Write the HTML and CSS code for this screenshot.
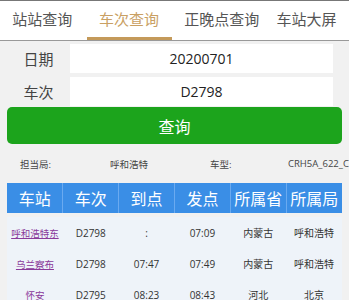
FILE: index.html
```html
<!DOCTYPE html>
<html lang="zh-CN">
<head>
    <meta charset="UTF-8">
    <meta name="viewport" content="width=device-width, initial-scale=1.0">
    <title>车次查询</title>
    <link rel="stylesheet" href="styles.css">
</head>
<body>
    <div class="tabs">
        <div class="tab">站站查询</div>
        <div class="tab active">车次查询</div>
        <div class="tab">正晚点查询</div>
        <div class="tab">车站大屏</div>
    </div>

    <form class="query">
        <div class="row">
            <label>日期</label>
            <div class="field">20200701</div>
        </div>
        <div class="row">
            <label>车次</label>
            <div class="field">D2798</div>
        </div>
        <button type="button" class="submit">查询</button>
    </form>

    <div class="info">
        <span>担当局:</span>
        <span>呼和浩特</span>
        <span>车型:</span>
        <span>CRH5A_622_C</span>
    </div>

    <table class="stops">
        <thead>
            <tr>
                <th>车站</th>
                <th>车次</th>
                <th>到点</th>
                <th>发点</th>
                <th>所属省</th>
                <th>所属局</th>
            </tr>
        </thead>
        <tbody>
            <tr>
                <td><a href="#">呼和浩特东</a></td>
                <td>D2798</td>
                <td>:</td>
                <td>07:09</td>
                <td>内蒙古</td>
                <td>呼和浩特</td>
            </tr>
            <tr>
                <td><a href="#">乌兰察布</a></td>
                <td>D2798</td>
                <td>07:47</td>
                <td>07:49</td>
                <td>内蒙古</td>
                <td>呼和浩特</td>
            </tr>
            <tr>
                <td><a href="#">怀安</a></td>
                <td>D2795</td>
                <td>08:23</td>
                <td>08:43</td>
                <td>河北</td>
                <td>北京</td>
            </tr>
        </tbody>
    </table>
</body>
</html>
```

FILE: styles.css
```css
body {
    margin: 0;
    background-color: #f1f1f1;
    font-family: "Open Sans", "Noto Sans CJK SC", sans-serif;
    color: #333;
    overflow: hidden;
}

.tabs {
    display: flex;
    height: 39px;
    background-color: #fff;
    border-top: 1px solid #777;
    border-bottom: 1px solid #999;
}

.tab {
    flex: 1;
    text-align: center;
    line-height: 36px;
    font-size: 15px;
    color: #555;
    border-bottom: 3px solid transparent;
}

.tab.active {
    color: #c9a063;
    border-bottom-color: #c49a5a;
    margin: 0 8px 0 2px;
}

.query {
    padding: 3px 7px 0;
}

.row {
    display: flex;
    align-items: center;
    margin-bottom: 4px;
}

.row label {
    width: 63px;
    text-align: center;
    font-size: 15px;
    color: #444;
}

.field {
    flex: 1;
    height: 29px;
    line-height: 29px;
    margin-right: 9px;
    background-color: #fff;
    text-align: center;
    font-size: 14px;
    color: #222;
}

.submit {
    display: block;
    width: 100%;
    height: 37px;
    margin-top: -3px;
    border: none;
    border-radius: 5px;
    background-color: #1ca41c;
    color: #fff;
    font-family: inherit;
    font-size: 16px;
}

.info {
    display: grid;
    grid-template-columns: 90px 100px 78px auto;
    margin: 4px 0 0 7px;
    padding-left: 13px;
    height: 31px;
    align-items: center;
    font-size: 9.5px;
    color: #444;
    white-space: nowrap;
}

.stops {
    width: 335px;
    margin: 4px 7px 0;
    border-collapse: collapse;
    table-layout: fixed;
}

.stops th {
    height: 30px;
    padding: 0;
    background-color: #3a8ee6;
    color: #fff;
    font-size: 16px;
    font-weight: normal;
    border-left: 1px solid #6aaaf0;
}

.stops th:first-child {
    border-left: none;
}

.stops tbody tr:first-child td {
    border-top: 4px solid #f1f1f1;
}

.stops td {
    height: 31px;
    padding: 0;
    text-align: center;
    font-size: 10px;
    color: #333;
    background-color: #eef3f9;
}

.stops td a {
    color: #8a3a9a;
    font-size: 9.5px;
}
```
